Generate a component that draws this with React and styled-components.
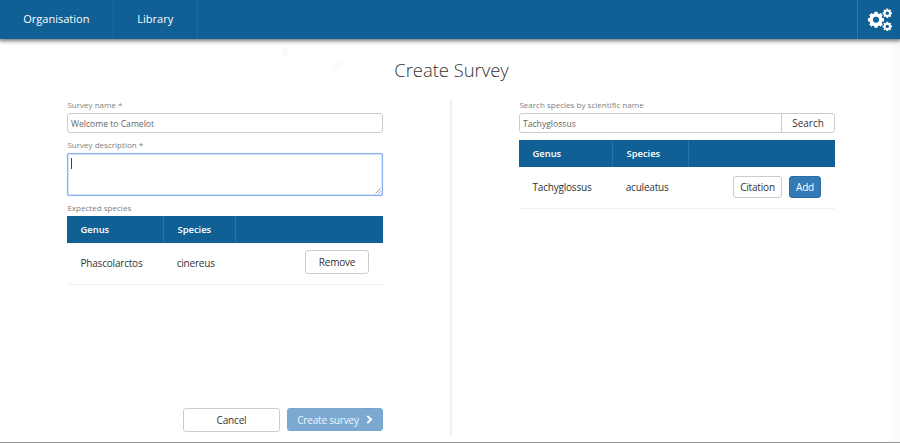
import React from "react";
import styled, { createGlobalStyle, css } from "styled-components";

const GlobalStyle = createGlobalStyle`
  * { box-sizing: border-box; }
  body {
    margin: 0;
    background: #fff;
    color: #333;
    font-family: "Open Sans", sans-serif;
    font-size: 10px;
    overflow: hidden;
  }
`;

const Page = styled.div`
  display: flex;
  flex-direction: column;
  height: 443px;
  width: 900px;
  border-bottom: 1px solid #999;
  background:
    radial-gradient(circle at 285px 53px, #fafafa 2px, transparent 6px),
    radial-gradient(circle at 338px 66px, #fafafa 2px, transparent 6px),
    linear-gradient(to right, #fff 890px, #fbfbfb 893px);
`;

const NavBar = styled.nav`
  display: flex;
  flex: none;
  height: 39px;
  background: #106096;
  box-shadow: 0 1px 4px 1px rgba(0, 0, 0, 0.55);
`;

const NavItem = styled.a`
  width: ${(p) => p.$width}px;
  padding-left: 23.3px;
  border-right: 1px solid #1c6ba1;
  color: #fff;
  font-size: 11px;
  line-height: 38px;
`;

const SettingsItem = styled.a`
  width: 43px;
  margin-left: auto;
  border-left: 1px solid #2b78ab;

  svg { display: block; }
`;

const Title = styled.h1`
  flex: none;
  margin: 16px 0 0 3px;
  height: 30px;
  color: #333;
  font-size: 18.4px;
  font-weight: 300;
  line-height: 30px;
  text-align: center;
`;

const Columns = styled.main`
  display: flex;
  height: 336px;
  margin: 14px 65px 0 67px;
`;

const Column = styled.section`
  display: flex;
  flex-direction: column;
  width: 316px;
`;

const Divider = styled.div`
  width: 2px;
  margin: 0 67px;
  background: #f1f1f1;
`;

const Label = styled.label`
  height: 14px;
  margin-top: ${(p) => p.$gap || 0}px;
  padding-left: 0.4px;
  color: #808080;
  font-size: 8px;
  letter-spacing: 0.02px;
  line-height: 12px;
`;

const inputText = css`
  padding: 1px 3px 0;
  background: #fff;
  color: #666;
  font-family: inherit;
  font-size: 8.6px;
  outline: none;
`;

const Input = styled.input`
  ${inputText}
  height: 20px;
  width: 100%;
  min-width: 0;
  border: 1px solid #ccc;
  border-radius: ${(p) => (p.$grouped ? "3px 0 0 3px" : "3px")};
`;

const TextArea = styled.div`
  ${inputText}
  display: flex;
  justify-content: space-between;
  height: 43px;
  padding: 4px 1px 1px 3px;
  border: 1px solid #8db1ee;
  border-radius: 2px;
  box-shadow: inset 0 0 0 0.5px #a9c8f8, 0 0 1px #a9c8f8;

  svg { align-self: flex-end; }
`;

const Caret = styled.span`
  width: 1px;
  height: 11px;
  background: #444;
`;

const SearchGroup = styled.div`
  display: flex;
  height: 20px;
`;

const Button = styled.button`
  display: flex;
  align-items: center;
  justify-content: center;
  flex: none;
  width: ${(p) => p.$width}px;
  height: ${(p) => p.$height}px;
  padding: 0;
  border: 1px solid #ccc;
  border-radius: 3px;
  background: #fff;
  color: #333;
  font-family: inherit;
  font-size: 10px;
  letter-spacing: -0.18px;
  line-height: 1;
  white-space: nowrap;

  ${(p) => p.$primary && css`
    border-color: #2e6da4;
    background: #337ab7;
    color: #fff;
  `}
  ${(p) => p.$muted && css`
    border-color: #7ba5cb;
    background: #7ca9d1;
    color: #edf4fa;
  `}
  ${(p) => p.$grouped && css`
    margin-left: -1px;
    border-radius: 0 3px 3px 0;
    letter-spacing: 0;
  `}
`;

const Table = styled.div`
  margin-top: ${(p) => p.$gap}px;
`;

const TableHead = styled.div`
  display: grid;
  grid-template-columns: ${(p) => p.$columns};
  height: 27px;
  background: #106096;
  color: #fff;
  font-size: 9.4px;
  font-weight: 600;
  line-height: 27px;
`;

const HeadCell = styled.div`
  padding-left: 13.5px;
  border-right: 1px solid #2474a8;

  &:last-child { border-right: 0; }
`;

const TableRow = styled.div`
  display: grid;
  grid-template-columns: ${(p) => p.$columns};
  height: 42px;
  border-bottom: 1px solid #f1f1f1;
  letter-spacing: -0.2px;
  line-height: 41px;
`;

const Cell = styled.div`
  padding-left: 13.5px;

  & + & { padding-left: 12.7px; }
`;

const RowActions = styled.div`
  display: flex;
  align-items: center;
  justify-content: flex-end;
  gap: 7px;
  padding: 0 14px ${(p) => p.$lift || 0}px 0;
`;

const Footer = styled.footer`
  display: flex;
  justify-content: flex-end;
  gap: 7px;
  margin: auto 0 3px;
`;

const ButtonIcon = styled.svg`
  margin-left: 7px;
`;

function gearPath(cx, cy, outer, root, hole) {
  const points = [];
  for (let i = 0; i < 8; i += 1) {
    const angle = (i * Math.PI) / 4;
    [[-0.27, root], [-0.2, outer], [0.2, outer], [0.27, root]].forEach(([offset, r]) => {
      points.push(
        `${(cx + r * Math.cos(angle + offset)).toFixed(2)} ${(cy + r * Math.sin(angle + offset)).toFixed(2)}`
      );
    });
  }
  return `M${points.join("L")}ZM${cx - hole} ${cy}a${hole} ${hole} 0 1 0 ${hole * 2} 0a${hole} ${hole} 0 1 0 ${-hole * 2} 0Z`;
}

function Gears() {
  return (
    <svg width="42" height="39" viewBox="0 0 42 39" fill="#fff" fillRule="evenodd">
      <path d={gearPath(18, 19.8, 8.2, 6.6, 3)} />
      <path d={gearPath(29.3, 13.3, 4.8, 3.7, 1.7)} />
      <path d={gearPath(29.3, 26.4, 4.8, 3.7, 1.7)} />
    </svg>
  );
}

function SpeciesTable({ gap, columns, genus, species, lift, children }) {
  return (
    <Table $gap={gap}>
      <TableHead $columns={columns}>
        <HeadCell>Genus</HeadCell>
        <HeadCell>Species</HeadCell>
        <HeadCell />
      </TableHead>
      <TableRow $columns={columns}>
        <Cell>{genus}</Cell>
        <Cell>{species}</Cell>
        <RowActions $lift={lift}>{children}</RowActions>
      </TableRow>
    </Table>
  );
}

export default function App() {
  return (
    <>
      <GlobalStyle />
      <Page>
        <NavBar>
          <NavItem $width={114}>Organisation</NavItem>
          <NavItem $width={84}>Library</NavItem>
          <SettingsItem aria-label="Settings"><Gears /></SettingsItem>
        </NavBar>
        <Title>Create Survey</Title>
        <Columns>
          <Column>
            <Label>Survey name *</Label>
            <Input defaultValue="Welcome to Camelot" />
            <Label $gap={6}>Survey description *</Label>
            <TextArea>
              <Caret />
              <svg width="6" height="6" viewBox="0 0 6 6" stroke="#777" strokeWidth="0.8">
                <path d="M0.5 5.5L5.5 0.5M3.5 5.5L5.5 3.5" />
              </svg>
            </TextArea>
            <Label $gap={6}>Expected species</Label>
            <SpeciesTable gap={0} columns="97px 72px 1fr" genus="Phascolarctos" species="cinereus" lift={3}>
              <Button $width={64} $height={24}>Remove</Button>
            </SpeciesTable>
            <Footer>
              <Button $width={97} $height={24}>Cancel</Button>
              <Button $width={96} $height={23} $muted>
                Create survey
                <ButtonIcon width="7" height="9" viewBox="0 0 7 9" fill="none" stroke="#fff" strokeWidth="2">
                  <path d="M1.3 0.9L5 4.5L1.3 8.1" />
                </ButtonIcon>
              </Button>
            </Footer>
          </Column>
          <Divider />
          <Column>
            <Label>Search species by scientific name</Label>
            <SearchGroup>
              <Input $grouped defaultValue="Tachyglossus" />
              <Button $grouped $width={54} $height={20}>Search</Button>
            </SearchGroup>
            <SpeciesTable gap={7} columns="94px 76px 1fr" genus="Tachyglossus" species="aculeatus" lift={1}>
              <Button $width={49} $height={22}>Citation</Button>
              <Button $width={32} $height={22} $primary>Add</Button>
            </SpeciesTable>
          </Column>
        </Columns>
      </Page>
    </>
  );
}
